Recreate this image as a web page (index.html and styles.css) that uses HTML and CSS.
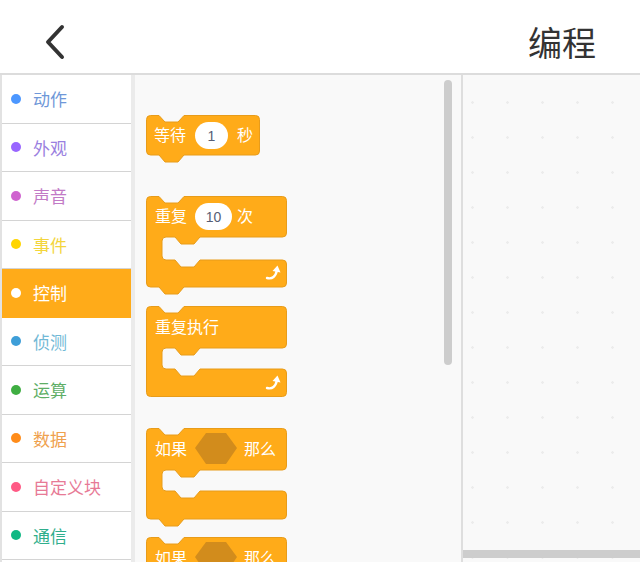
FILE: index.html
```html
<!DOCTYPE html>
<html>
<head>
    <title>编程</title>
    <link rel="stylesheet" href="styles.css">
</head>
<body>
    <div class="header">
        <svg class="back" width="24" height="36" viewBox="0 0 24 36">
            <path d="M19,3 L5,18 L19,33" fill="none" stroke="#333" stroke-width="4" stroke-linecap="round" stroke-linejoin="round"/>
        </svg>
        <div class="title">编程</div>
    </div>

    <div class="main">
        <ul class="categories">
            <li class="cat motion"><span class="dot"></span>动作</li>
            <li class="cat looks"><span class="dot"></span>外观</li>
            <li class="cat sound"><span class="dot"></span>声音</li>
            <li class="cat events"><span class="dot"></span>事件</li>
            <li class="cat control selected"><span class="dot"></span>控制</li>
            <li class="cat sensing"><span class="dot"></span>侦测</li>
            <li class="cat operators"><span class="dot"></span>运算</li>
            <li class="cat data"><span class="dot"></span>数据</li>
            <li class="cat custom"><span class="dot"></span>自定义块</li>
            <li class="cat comm"><span class="dot"></span>通信</li>
        </ul>

        <div class="palette">
            <!-- wait -->
            <svg class="block block-wait" width="120" height="50" viewBox="0 0 120 50">
                <path class="shape" d="M0.5,4.5 Q0.5,0.5 4.5,0.5 H13 L19,7 H32 L38,0.5 H109.5 Q113.5,0.5 113.5,4.5 V36 Q113.5,40 109.5,40 H38 L32,47 H19 L13,40 H4.5 Q0.5,40 0.5,36 Z"/>
                <text class="label" x="8" y="26">等待</text>
                <rect class="field" x="49" y="7" width="33" height="27" rx="13.5"/>
                <text class="num" x="65.5" y="26" text-anchor="middle">1</text>
                <text class="label" x="91" y="26">秒</text>
            </svg>

            <!-- repeat -->
            <svg class="block block-repeat" width="146" height="100" viewBox="0 0 146 100">
                <path class="shape" d="M0.5,4.5 Q0.5,0.5 4.5,0.5 H13 L19,7 H32 L38,0.5 H136.5 Q140.5,0.5 140.5,4.5 V37 Q140.5,41 136.5,41 H54 L48,48 H35 L29,41 H20 Q16,41 16,45 V60 Q16,64 20,64 H29 L35,71 H48 L54,64 H136.5 Q140.5,64 140.5,68 V87 Q140.5,91 136.5,91 H38 L32,98 H19 L13,91 H4.5 Q0.5,91 0.5,87 Z"/>
                <text class="label" x="9" y="26">重复</text>
                <rect class="field" x="49" y="7" width="37" height="27" rx="13.5"/>
                <text class="num" x="67.5" y="26" text-anchor="middle">10</text>
                <text class="label" x="91" y="26">次</text>
                <path class="arrow" d="M121,82 Q129,84 131,74"/>
                <path class="arrow-head" d="M126.5,75 L131.5,69.5 L134.5,76.5 Z"/>
            </svg>

            <!-- forever -->
            <svg class="block block-forever" width="146" height="92" viewBox="0 0 146 92">
                <path class="shape" d="M0.5,4.5 Q0.5,0.5 4.5,0.5 H13 L19,7 H32 L38,0.5 H136.5 Q140.5,0.5 140.5,4.5 V38 Q140.5,42 136.5,42 H54 L48,49 H35 L29,42 H20 Q16,42 16,46 V59 Q16,63 20,63 H29 L35,70 H48 L54,63 H136.5 Q140.5,63 140.5,67 V86.5 Q140.5,90.5 136.5,90.5 H4.5 Q0.5,90.5 0.5,86.5 Z"/>
                <text class="label" x="9" y="27">重复执行</text>
                <path class="arrow" d="M121,82 Q129,84 131,74"/>
                <path class="arrow-head" d="M126.5,75 L131.5,69.5 L134.5,76.5 Z"/>
            </svg>

            <!-- if -->
            <svg class="block block-if" width="146" height="100" viewBox="0 0 146 100">
                <path class="shape" d="M0.5,4.5 Q0.5,0.5 4.5,0.5 H13 L19,7 H32 L38,0.5 H136.5 Q140.5,0.5 140.5,4.5 V38 Q140.5,42 136.5,42 H54 L48,49 H35 L29,42 H20 Q16,42 16,46 V59 Q16,63 20,63 H29 L35,70 H48 L54,63 H136.5 Q140.5,63 140.5,67 V87 Q140.5,91 136.5,91 H38 L32,98 H19 L13,91 H4.5 Q0.5,91 0.5,87 Z"/>
                <text class="label" x="9" y="27">如果</text>
                <path class="hex" d="M49,20 L60,5 H80 L91,20 L80,36 H60 Z"/>
                <text class="label" x="98" y="27">那么</text>
            </svg>

            <!-- if (cut off by the palette edge) -->
            <svg class="block block-if2" width="146" height="100" viewBox="0 0 146 100">
                <path class="shape" d="M0.5,4.5 Q0.5,0.5 4.5,0.5 H13 L19,7 H32 L38,0.5 H136.5 Q140.5,0.5 140.5,4.5 V38 Q140.5,42 136.5,42 H54 L48,49 H35 L29,42 H20 Q16,42 16,46 V59 Q16,63 20,63 H29 L35,70 H48 L54,63 H136.5 Q140.5,63 140.5,67 V87 Q140.5,91 136.5,91 H38 L32,98 H19 L13,91 H4.5 Q0.5,91 0.5,87 Z"/>
                <text class="label" x="9" y="27">如果</text>
                <path class="hex" d="M49,20 L60,5 H80 L91,20 L80,36 H60 Z"/>
                <text class="label" x="98" y="27">那么</text>
            </svg>

            <div class="vscroll"></div>
        </div>

        <div class="canvas">
            <div class="hscroll"></div>
        </div>
    </div>
</body>
</html>
```

FILE: styles.css
```css
/* Styles for the coding page */

body {
    margin: 0;
    padding: 0;
    background-color: #fff;
    font-family: "Noto Sans CJK SC", "Noto Sans", sans-serif;
    width: 640px;
    height: 562px;
    overflow: hidden;
}

.header {
    height: 75px;
    box-sizing: border-box;
    padding: 10px 44px 0 43px;
    display: flex;
    align-items: center;
    justify-content: space-between;
    border-bottom: 2px solid #dcdcdc;
}

.back {
    display: block;
}

.title {
    font-size: 34px;
    color: #333;
    line-height: 1;
}

.main {
    display: flex;
    height: 487px;
}

.categories {
    list-style: none;
    margin: 0;
    padding: 0;
    width: 129px;
    border-left: 2px solid #e2e2e2;
    border-right: 4px solid #ebebeb;
    background-color: #fff;
    flex-shrink: 0;
}

.cat {
    height: 48.5px;
    box-sizing: border-box;
    border-bottom: 1px solid #d4d4d4;
    display: flex;
    align-items: center;
    padding-left: 9px;
    font-size: 17px;
    gap: 12px;
}

.dot {
    width: 10px;
    height: 10px;
    border-radius: 50%;
}

.motion { color: #6f97d8; }
.motion .dot { background-color: #4c97ff; }
.looks { color: #9a80e0; }
.looks .dot { background-color: #9966ff; }
.sound { color: #c27ac6; }
.sound .dot { background-color: #cf63cf; }
.events { color: #f3d53c; }
.events .dot { background-color: #ffd500; }
.sensing { color: #72b9d6; }
.sensing .dot { background-color: #3e9ed8; }
.operators { color: #5eae66; }
.operators .dot { background-color: #3fae42; }
.data { color: #efa14e; }
.data .dot { background-color: #ff8c1a; }
.custom { color: #e77a96; }
.custom .dot { background-color: #ff5a85; }
.comm { color: #2fae8c; }
.comm .dot { background-color: #10b884; }

.cat.selected {
    background-color: #ffab19;
    color: #fff;
    border-bottom-color: #ffab19;
}

.cat.selected .dot {
    background-color: #fff;
}

.palette {
    position: relative;
    width: 328px;
    flex-shrink: 0;
    background-color: #f9f9f9;
    border-right: 2px solid #dedede;
    padding: 40px 0 0 11px;
    box-sizing: border-box;
    overflow: hidden;
}

.block {
    display: block;
    overflow: visible;
}

.block-repeat { margin-top: 31px; }
.block-forever { margin-top: 10px; }
.block-if { margin-top: 30px; }
.block-if2 { margin-top: 9px; }

.shape {
    fill: #ffab19;
    stroke: #e89c1a;
    stroke-width: 1;
}

.label {
    fill: #fff;
    font-size: 16px;
    font-family: "Noto Sans CJK SC", "Noto Sans", sans-serif;
}

.field {
    fill: #fff;
}

.num {
    fill: #575e75;
    font-size: 14px;
    font-family: "Liberation Sans", Arial, sans-serif;
}

.hex {
    fill: #d28c1c;
}

.arrow {
    fill: none;
    stroke: #fff;
    stroke-width: 2.4;
    stroke-linecap: round;
}

.arrow-head {
    fill: #fff;
}

.vscroll {
    position: absolute;
    left: 309px;
    top: 5px;
    width: 8px;
    height: 285px;
    border-radius: 4px;
    background-color: #cdcdcd;
}

.canvas {
    position: relative;
    flex: 1;
    background-color: #f9f9f9;
    background-image: radial-gradient(circle, #ececec 1px, transparent 1.5px);
    background-size: 35px 35px;
    background-position: -8px 10px;
}

.hscroll {
    position: absolute;
    left: 0;
    right: 0;
    bottom: 4px;
    height: 8px;
    background-color: #cdcdcd;
}
```
